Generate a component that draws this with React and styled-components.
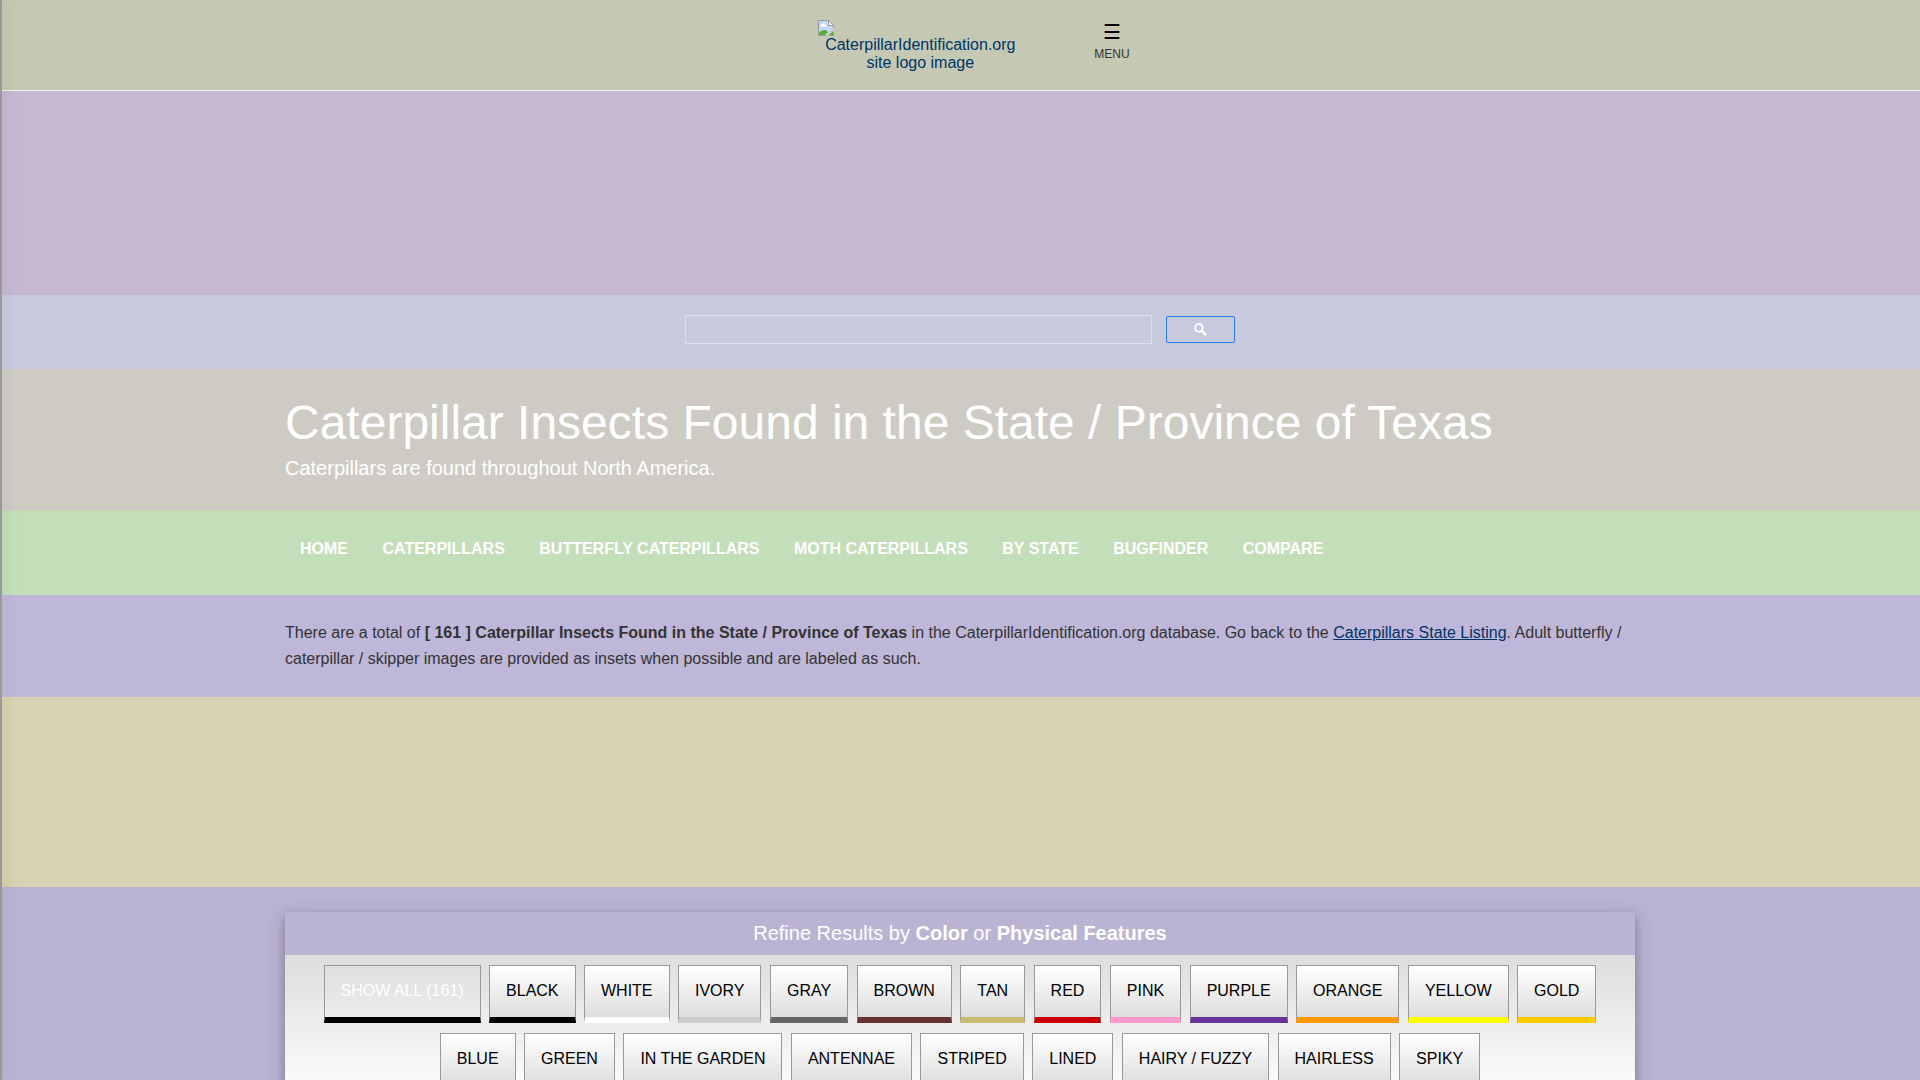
import React from 'react';
import styled, { createGlobalStyle } from 'styled-components';

const GlobalStyle = createGlobalStyle`
  * { box-sizing: border-box; }
  body {
    margin: 0;
    color: #333;
    background: #bbb3d3;
    font-family: "Liberation Sans", Arial, Helvetica, sans-serif;
    font-size: 16px;
    line-height: 26px;
  }
`;

const SideEdge = styled.aside`
  position: fixed;
  top: 0;
  bottom: 0;
  left: 0;
  width: 2px;
  background: #999;
  box-shadow: 0 0 16px rgba(0, 0, 0, 0.25);
`;

const Header = styled.header`
  display: flex;
  justify-content: center;
  align-items: flex-start;
  gap: 72px;
  padding: 20px 0 18px 28px;
  background: #c5c9b3;
  border-bottom: 1px solid #eee;
`;

const Logo = styled.a`
  display: block;
  width: 204px;
  color: #036;
  line-height: 18px;
  text-align: center;
  text-decoration: none;

  svg { display: block; }
`;

const MenuButton = styled.button`
  display: flex;
  flex-direction: column;
  align-items: center;
  padding: 0;
  border: 0;
  background: none;
  color: #333;
  font: 12px/18px "Liberation Sans", Arial, sans-serif;
  cursor: pointer;
`;

const Bars = styled.span`
  color: #000;
  font-size: 20px;
  line-height: 25px;
`;

const AdSpace = styled.div`
  height: ${(p) => p.$height};
  background: ${(p) => p.$color};
`;

const Section = styled.section`
  padding: ${(p) => p.$pad || '25px 20px'};
  background: ${(p) => p.$color};
`;

const Container = styled.div`
  max-width: 1350px;
  margin: 0 auto;
`;

const SearchForm = styled.form`
  display: flex;
  align-items: center;
  justify-content: center;
  gap: 14px;
`;

const SearchInput = styled.input`
  width: 467px;
  height: 29px;
  padding: 0 8px;
  border: 1px solid #dfdfe8;
  background: transparent;
  font: 16px "Liberation Sans", Arial, sans-serif;
`;

const SearchButton = styled.button`
  display: flex;
  align-items: center;
  justify-content: center;
  width: 69px;
  height: 27px;
  padding: 0;
  border: 1px solid #2b78f4;
  border-radius: 2px;
  background: transparent;
  cursor: pointer;
`;

const Title = styled.h1`
  margin: 0;
  color: #fff;
  font-size: 48px;
  font-weight: 400;
  line-height: 58px;
`;

const Subtitle = styled.p`
  margin: 0;
  color: #fff;
  font-size: 20px;
  line-height: 33px;
`;

const NavLink = styled.a`
  display: inline-block;
  padding: 0 15px;
  color: #fff;
  font-weight: 700;
  text-decoration: none;
`;

const Intro = styled.p`
  margin: 0;

  a { color: #036; }
`;

const Panel = styled(Container)`
  box-shadow: 0 4px 8px rgba(0, 0, 0, 0.2), 0 6px 20px rgba(0, 0, 0, 0.19);
`;

const PanelTitle = styled.h2`
  margin: 0;
  padding: 10px;
  background: #bbb3d3;
  color: #fff;
  font-size: 20px;
  font-weight: 400;
  line-height: 23px;
  text-align: center;
`;

const Filters = styled.div`
  padding: 5px 0;
  background: linear-gradient(#ddd, #fff);
  text-align: center;
`;

const FilterButton = styled.button`
  display: inline-block;
  margin: 5px 2px;
  padding: 16px 16px 17px;
  border: 1px solid #999;
  border-bottom: 6px solid ${(p) => p.$bar};
  background: ${(p) => (p.$active ? 'transparent' : 'linear-gradient(#fff, #ddd)')};
  color: ${(p) => (p.$active ? '#fff' : '#000')};
  font: 16px/18px "Liberation Sans", Arial, sans-serif;
  cursor: pointer;
`;

const NAV = ['HOME', 'CATERPILLARS', 'BUTTERFLY CATERPILLARS', 'MOTH CATERPILLARS', 'BY STATE', 'BUGFINDER', 'COMPARE'];

const FILTERS = [
  ['SHOW ALL (161)', '#000'],
  ['BLACK', '#000'],
  ['WHITE', '#fff'],
  ['IVORY', '#ccc'],
  ['GRAY', '#666'],
  ['BROWN', '#633'],
  ['TAN', '#c8bc70'],
  ['RED', '#c00'],
  ['PINK', '#f9c'],
  ['PURPLE', '#639'],
  ['ORANGE', '#f90'],
  ['YELLOW', '#ff0'],
  ['GOLD', '#fc0'],
  ['BLUE', '#00c'],
  ['GREEN', '#090'],
  ['IN THE GARDEN', '#999'],
  ['ANTENNAE', '#999'],
  ['STRIPED', '#999'],
  ['LINED', '#999'],
  ['HAIRY / FUZZY', '#999'],
  ['HAIRLESS', '#999'],
  ['SPIKY', '#999'],
];

function BrokenImage() {
  return (
    <svg width="16" height="16" viewBox="0 0 16 16" aria-hidden="true">
      <path d="M.5.5h10.500l4.500 4.500v3L8 15.500H.5z" fill="#c6d8f8" />
      <path d="M2.500 6.500c-.5-1.300.5-2 1.400-1.800C4.300 3.200 6.500 3.200 7 4.700c1.100-.1 1.500 1 1 1.800z" fill="#fff" />
      <path d="M1 15v-2c2-3.200 6.500-4.200 9-1L7 15z" fill="#57ad3a" />
      <path d="M15 11.500V15h-4z" fill="#57ad3a" />
      <path d="M8 15.500H.5V.5h10.500M15.500 5v3M15.500 11.500v4H11" fill="none" stroke="#999" />
      <path d="M10.500.5v5h5z" fill="#fff" stroke="#999" />
    </svg>
  );
}

export default function App() {
  return (
    <>
      <GlobalStyle />
      <Header>
        <Logo href="#">
          <BrokenImage />
          CaterpillarIdentification.org site logo image
        </Logo>
        <MenuButton type="button">
          <Bars>☰</Bars>
          MENU
        </MenuButton>
      </Header>
      <AdSpace $height="204px" $color="#c6b8d2" />
      <Section $color="#c7c9dd" $pad="20px 20px 25px">
        <SearchForm role="search" onSubmit={(e) => e.preventDefault()}>
          <SearchInput type="text" aria-label="search" />
          <SearchButton type="submit" aria-label="search">
            <svg width="13" height="13" viewBox="0 0 13 13" aria-hidden="true">
              <circle cx="4.900" cy="4.900" r="3.800" fill="none" stroke="#fff" strokeWidth="2" />
              <path d="M7.800 7.800l4.300 4.300" stroke="#fff" strokeWidth="2.200" />
            </svg>
          </SearchButton>
        </SearchForm>
      </Section>
      <Section $color="#cecbc4">
        <Container>
          <Title>Caterpillar Insects Found in the State / Province of Texas</Title>
          <Subtitle>Caterpillars are found throughout North America.</Subtitle>
        </Container>
      </Section>
      <Section $color="#c4deb9" $pad="26px 20px 33px">
        <Container as="nav">
          {NAV.map((label) => (
            <React.Fragment key={label}>
              <NavLink href="#">{label}</NavLink>{' '}
            </React.Fragment>
          ))}
        </Container>
      </Section>
      <Section $color="#bfb7d9">
        <Container>
          <Intro>
            There are a total of <strong>[ 161 ] Caterpillar Insects Found in the State / Province of Texas</strong> in
            the CaterpillarIdentification.org database. Go back to the <a href="#">Caterpillars State Listing</a>. Adult
            butterfly / caterpillar / skipper images are provided as insets when possible and are labeled as such.
          </Intro>
        </Container>
      </Section>
      <AdSpace $height="190px" $color="#d8d2b2" />
      <Section $color="#bbb3d3">
        <Panel>
          <PanelTitle>
            Refine Results by <strong>Color</strong> or <strong>Physical Features</strong>
          </PanelTitle>
          <Filters>
            {FILTERS.map(([label, bar], i) => (
              <React.Fragment key={label}>
                <FilterButton type="button" $bar={bar} $active={i === 0}>
                  {label}
                </FilterButton>{' '}
              </React.Fragment>
            ))}
          </Filters>
        </Panel>
      </Section>
      <SideEdge />
    </>
  );
}
